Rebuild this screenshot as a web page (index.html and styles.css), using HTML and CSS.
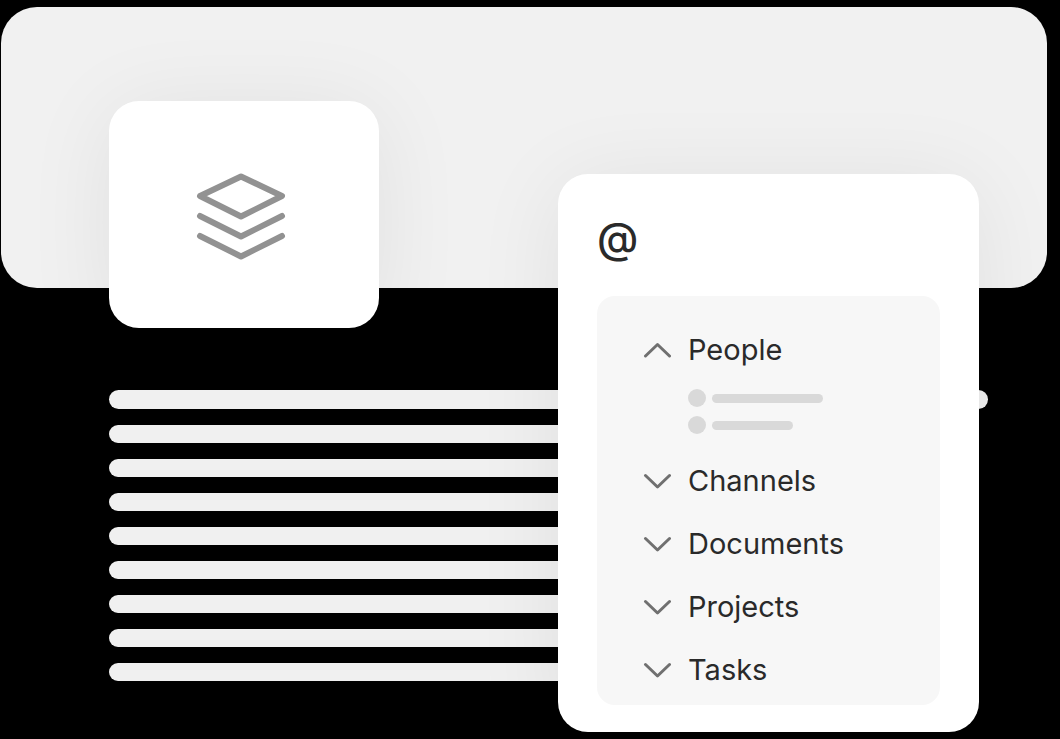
FILE: index.html
```
<!DOCTYPE html>
<html lang="en">
<head>
<meta charset="utf-8">
<title>Mention menu</title>
<link rel="stylesheet" href="styles.css">
</head>
<body>
<main class="page">
  <div class="cover"></div>
  <div class="doc-icon">
    <svg class="layers" viewBox="0 0 92 90" aria-hidden="true">
      <path d="M46 5.500 87 25 46 45.500 5 25Z"/>
      <path d="M5 45 46 65.500 87 45"/>
      <path d="M5 65 46 85.500 87 65"/>
    </svg>
  </div>
  <div class="lines">
    <div class="line line-first"></div>
    <div class="line"></div>
    <div class="line"></div>
    <div class="line"></div>
    <div class="line"></div>
    <div class="line"></div>
    <div class="line"></div>
    <div class="line"></div>
    <div class="line"></div>
  </div>
  <section class="popover" aria-label="Mention">
    <div class="trigger">@</div>
    <div class="menu">
      <button class="row" type="button" aria-expanded="true">
        <svg class="chevron" viewBox="0 0 28 18" aria-hidden="true"><path d="M2.500 15 14.500 3.500 26.500 15"/></svg>
        <span>People</span>
      </button>
      <div class="people">
        <div class="person"><span class="avatar"></span><span class="name"></span></div>
        <div class="person"><span class="avatar"></span><span class="name name-short"></span></div>
      </div>
      <button class="row" type="button" aria-expanded="false">
        <svg class="chevron" viewBox="0 0 28 18" aria-hidden="true"><path d="M2.500 3.500 14.500 15 26.500 3.500"/></svg>
        <span>Channels</span>
      </button>
      <button class="row" type="button" aria-expanded="false">
        <svg class="chevron" viewBox="0 0 28 18" aria-hidden="true"><path d="M2.500 3.500 14.500 15 26.500 3.500"/></svg>
        <span>Documents</span>
      </button>
      <button class="row" type="button" aria-expanded="false">
        <svg class="chevron" viewBox="0 0 28 18" aria-hidden="true"><path d="M2.500 3.500 14.500 15 26.500 3.500"/></svg>
        <span>Projects</span>
      </button>
      <button class="row" type="button" aria-expanded="false">
        <svg class="chevron" viewBox="0 0 28 18" aria-hidden="true"><path d="M2.500 3.500 14.500 15 26.500 3.500"/></svg>
        <span>Tasks</span>
      </button>
    </div>
  </section>
</main>
</body>
</html>
```
FILE: styles.css
```
* {
  box-sizing: border-box;
}

body {
  margin: 0;
  background: #000;
  color: #2a2a2a;
  font-family: Inter, "Liberation Sans", sans-serif;
}

.page {
  position: relative;
  display: flex;
  flex-direction: column;
  min-height: 100vh;
  padding: 7px 13px 7px 1px;
}

.cover {
  height: 281px;
  border-radius: 36px;
  background: #f1f1f1;
}

.doc-icon {
  display: flex;
  align-items: center;
  justify-content: center;
  width: 270px;
  height: 227px;
  margin: -187px 0 0 108px;
  padding: 2px 6px 0 0;
  border-radius: 30px;
  background: #fff;
  box-shadow: 0 8px 90px rgba(0, 0, 0, 0.07);
}

.layers {
  width: 92px;
  height: 90px;
  fill: none;
  stroke: #929292;
  stroke-width: 6;
  stroke-linecap: round;
  stroke-linejoin: round;
}

.lines {
  display: flex;
  flex-direction: column;
  gap: 16px;
  margin: 62px 59px 0 108px;
}

.line {
  height: 18px;
  margin-right: 60px;
  border-radius: 10px;
  background: #f0f0f0;
}

.line-first {
  height: 19px;
  margin-right: 0;
}

.popover {
  position: absolute;
  top: 174px;
  right: 81px;
  width: 421px;
  padding: 38px 39px 27px;
  border-radius: 30px;
  background: #fff;
  box-shadow: 0 8px 90px rgba(0, 0, 0, 0.07);
}

.trigger {
  margin-bottom: 32px;
  font-size: 42px;
  font-weight: 500;
  line-height: 52px;
}

.menu {
  display: flex;
  flex-direction: column;
  padding: 22px 46px 4px;
  border-radius: 18px;
  background: #f7f7f7;
}

.row {
  display: flex;
  align-items: center;
  gap: 17px;
  height: 63px;
  padding: 0;
  border: 0;
  background: none;
  color: inherit;
  font: inherit;
  font-size: 29px;
  text-align: left;
}

.chevron {
  width: 28px;
  height: 18px;
  fill: none;
  stroke: #707070;
  stroke-width: 3;
  stroke-linecap: round;
  stroke-linejoin: round;
}

.people {
  display: flex;
  flex-direction: column;
  gap: 9px;
  padding: 8px 0 15px 45px;
}

.person {
  display: flex;
  align-items: center;
  gap: 6px;
}

.avatar {
  width: 18px;
  height: 18px;
  border-radius: 50%;
  background: #d9d9d9;
}

.name {
  width: 111px;
  height: 9px;
  border-radius: 5px;
  background: #d9d9d9;
}

.name-short {
  width: 81px;
}
```
